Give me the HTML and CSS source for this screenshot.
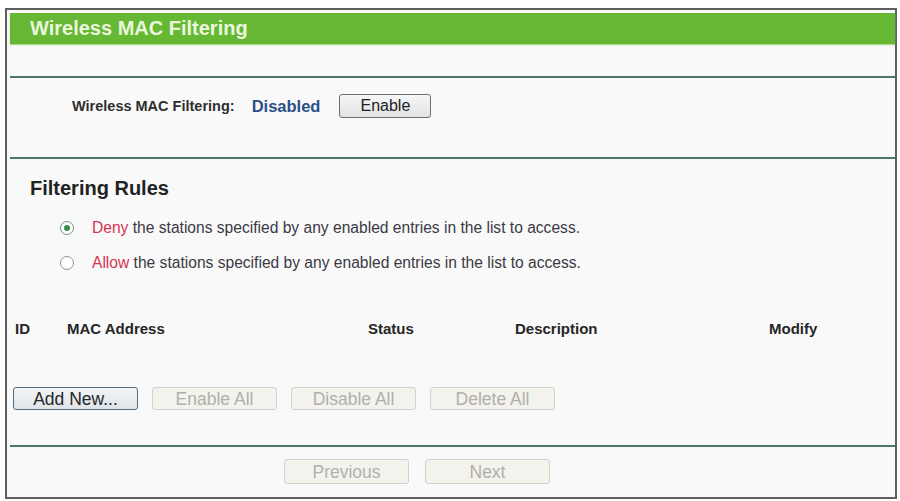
FILE: index.html
```html
<!DOCTYPE html>
<html>
<head>
<meta charset="utf-8">
<title>Wireless MAC Filtering</title>
<link rel="stylesheet" href="styles.css">
</head>
<body>
<div class="frame">
  <div class="title">Wireless MAC Filtering</div>
  <div class="spacer"></div>
  <div class="status-row">
    <span class="status-label">Wireless MAC Filtering:</span>
    <span class="status-value">Disabled</span>
    <button class="btn btn-enable">Enable</button>
  </div>
  <div class="rules">
    <h2 class="rules-title">Filtering Rules</h2>
    <div class="radio-list">
      <div class="radio-row">
        <span class="radio checked"></span>
        <span class="radio-text"><span class="kw">Deny</span> the stations specified by any enabled entries in the list to access.</span>
      </div>
      <div class="radio-row">
        <span class="radio"></span>
        <span class="radio-text"><span class="kw">Allow</span> the stations specified by any enabled entries in the list to access.</span>
      </div>
    </div>
    <div class="table-head">
      <span>ID</span>
      <span>MAC Address</span>
      <span>Status</span>
      <span>Description</span>
      <span>Modify</span>
    </div>
    <div class="actions">
      <button class="btn btn-primary">Add New...</button>
      <button class="btn btn-off">Enable All</button>
      <button class="btn btn-off">Disable All</button>
      <button class="btn btn-off">Delete All</button>
    </div>
  </div>
  <div class="footer">
    <button class="btn btn-off">Previous</button>
    <button class="btn btn-off">Next</button>
  </div>
</div>
</body>
</html>
```
FILE: styles.css
```css
html, body {
  margin: 0;
  padding: 0;
  background: #ffffff;
}
body {
  font-family: "Liberation Sans", Arial, sans-serif;
  color: #333;
}
.frame {
  box-sizing: border-box;
  margin: 8px 0 0 5px;
  width: 892px;
  height: 491px;
  border: 2px solid #5e5e5e;
  padding: 3px 0 0 3px;
  background: #f9f9f9;
}
.title {
  height: 31px;
  line-height: 31px;
  background: #66b733;
  color: #e9f7dc;
  font-weight: bold;
  font-size: 20px;
  padding-left: 20px;
  box-shadow: 0 1px 1px #a8d78a;
}
.spacer {
  height: 32px;
  border-bottom: 2px solid #4d7568;
}
.status-row {
  box-sizing: border-box;
  height: 81px;
  border-bottom: 2px solid #4d7568;
  display: flex;
  align-items: center;
  padding: 0 0 23px 62px;
}
.status-label {
  font-weight: bold;
  font-size: 14.5px;
  color: #2e2e2e;
}
.status-value {
  font-weight: bold;
  font-size: 16.5px;
  color: #2b4f86;
  margin-left: 17px;
}
.btn {
  font-family: "Liberation Sans", Arial, sans-serif;
  font-size: 17.5px;
  height: 24px;
  width: 125px;
  padding: 0;
  border-radius: 3px;
  line-height: 20px;
}
.btn-enable {
  width: 92px;
  font-size: 16px;
  margin-left: 19px;
  border: 1px solid #6e6e6e;
  background: linear-gradient(#f6f6f6, #e2e2e2);
  color: #222;
}
.btn-primary {
  border: 1px solid #566d80;
  background: linear-gradient(#f3f5f7, #dfe4e9);
  color: #262626;
}
.btn-off {
  border: 1px solid #d3d2ca;
  background: #f3f2ed;
  color: #b0b0aa;
}
.rules {
  height: 286px;
  border-bottom: 2px solid #4d7568;
}
.rules-title {
  margin: 0;
  padding: 17px 0 0 20px;
  font-size: 20px;
  line-height: 24px;
  font-weight: bold;
  color: #222;
}
.radio-list {
  margin-top: 10px;
}
.radio-row {
  display: flex;
  align-items: center;
  height: 35px;
  padding-left: 50px;
  font-size: 15.6px;
  color: #3a3a44;
}
.radio {
  box-sizing: border-box;
  width: 14px;
  height: 14px;
  border: 1px solid #8496a0;
  border-radius: 50%;
  background: #fff;
  position: relative;
  margin-right: 18px;
  flex: none;
}
.radio.checked {
  border-color: #6f9a78;
}
.radio.checked::after {
  content: "";
  position: absolute;
  left: 3px;
  top: 3px;
  width: 6px;
  height: 6px;
  border-radius: 50%;
  background: #3c8a4a;
}
.kw {
  color: #d6344f;
}
.table-head {
  display: grid;
  grid-template-columns: 52px 301px 147px 254px auto;
  margin-top: 40px;
  padding-left: 5px;
  font-weight: bold;
  font-size: 15px;
  color: #262626;
}
.actions {
  display: flex;
  gap: 14px;
  margin-top: 50px;
  padding-left: 3px;
}
.btn.btn-off, .btn.btn-primary {
  height: 23px;
}
.footer {
  display: flex;
  gap: 16px;
  padding: 12px 0 0 274px;
}
.footer .btn {
  height: 25px;
}
```
